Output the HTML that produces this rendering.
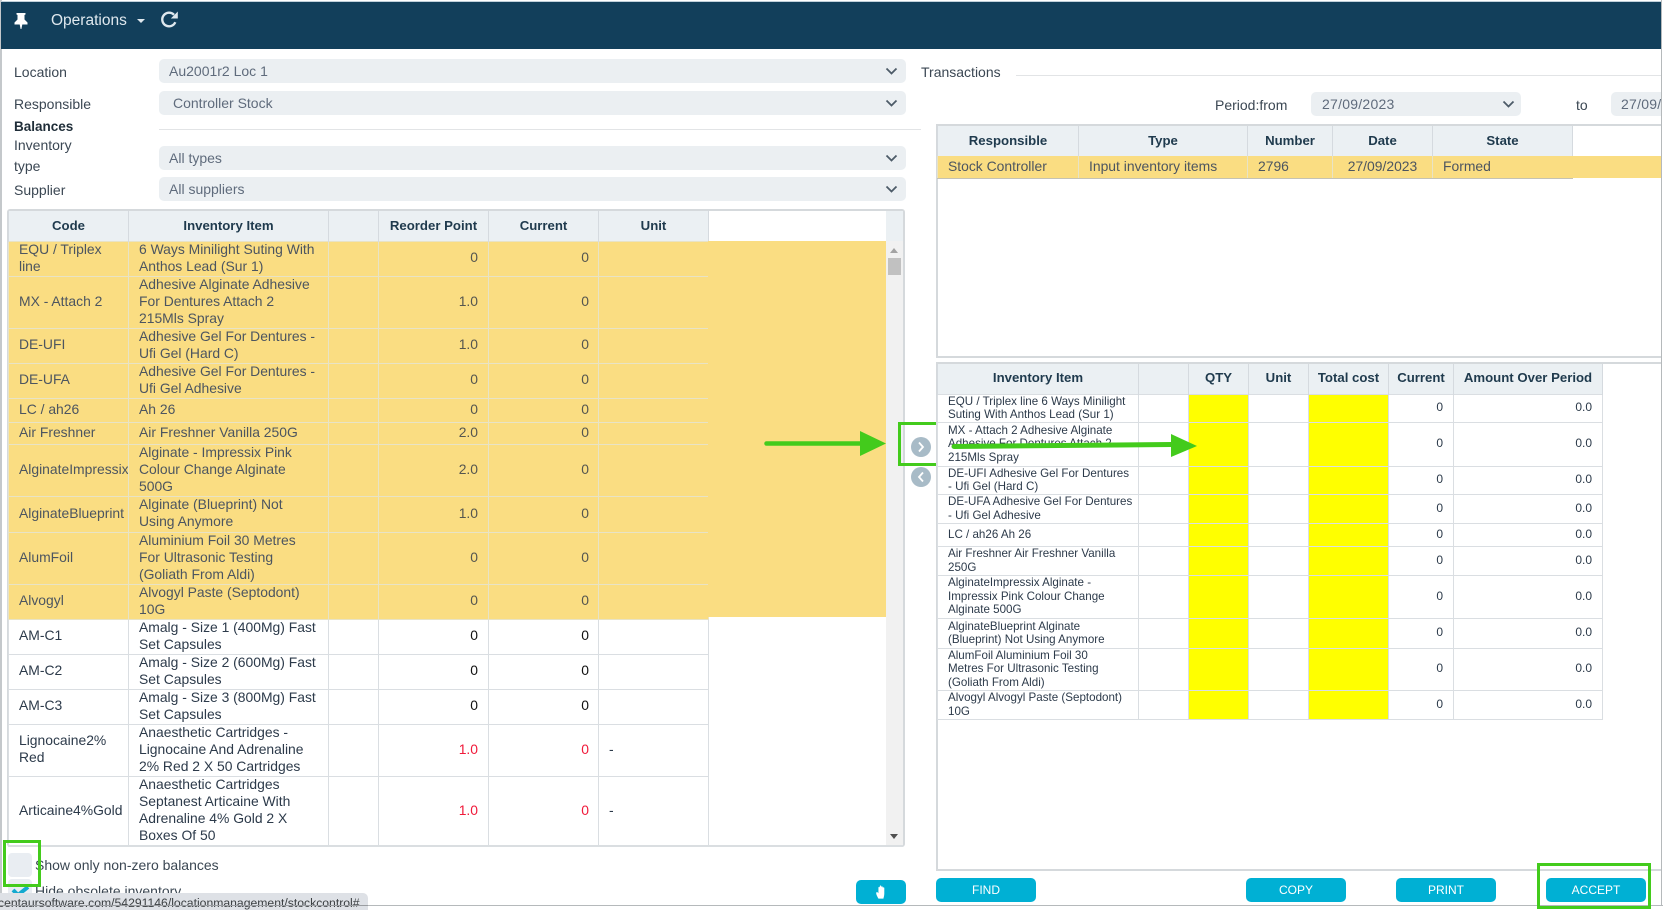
<!DOCTYPE html>
<html><head><meta charset="utf-8"><title>Operations</title>
<style>
html,body{margin:0;padding:0;width:1663px;height:910px;overflow:hidden;background:#fff;font-family:"Liberation Sans",sans-serif;color:#333}
.a{position:absolute;white-space:nowrap}
.lb{font-size:14px;color:#3b4753;line-height:17px}
.sel{position:absolute;background:#ebeff2;border-radius:5px;height:24px;line-height:25px;font-size:14px;color:#5f6b7c;padding-left:11px;box-sizing:border-box}
.chev{position:absolute;top:8px;width:13px;height:8px}
table{position:absolute;border-collapse:collapse;table-layout:fixed;font-size:13.9px;line-height:17px}
td,th{padding:0;white-space:nowrap;overflow:hidden}
th{background:#ebf0f3;color:#1f3a4d;font-weight:bold;font-size:13.2px;border-left:1px solid #d5dadf;border-right:1px solid #d5dadf;text-align:center}
i{font-style:normal;position:relative;top:-1px}
#L td{border:1px solid #dadee2;color:#2c3a4a}
#L tr.y td{background:#fadd82;color:#4c5560;border-color:#e8e3c6}
#L td:nth-child(1){padding-left:10px}
#L td:nth-child(2){padding-left:10px}
#L td:nth-child(4){text-align:right;padding-right:10px;color:#111}
#L td:nth-child(5){text-align:right;padding-right:9px;color:#111}
#L tr.y td:nth-child(4),#L tr.y td:nth-child(5){color:#55564f}
#L td.r{color:#f01a3a!important}
#R{font-size:11.6px;line-height:13.5px}
#R td{border:1px solid #dadee2;color:#2c3a4a;background:#fff}
#R td:nth-child(1){padding-left:10px}
#R td.q{background:#ff0}
#R td:nth-child(6),#R td:nth-child(7){text-align:right;padding-right:10px;font-size:12px}
#R th,#T th{padding-bottom:2px}
#T td{background:#fadd82;color:#4c5560;border-left:1px solid #e8e3c6;border-right:1px solid #e8e3c6;border-bottom:1px solid #c4c2b4}
.btn{position:absolute;background:#00b0d4;color:#fff;border-radius:5px;height:24px;line-height:24px;text-align:center;font-size:12px;width:100px}
.g{position:absolute;border:3px solid #43cb1c;box-sizing:border-box}
.ln{position:absolute;background:#d9dde0}
.cir{position:absolute;width:20px;height:20px;border-radius:50%;background:#a8bbc7}
</style></head><body>

<!-- page frame -->
<div class="ln" style="left:0;top:0;width:2px;height:905px;background:#c4c8cb"></div>
<div class="ln" style="left:1661px;top:0;width:1px;height:905px;background:#b5b9bb"></div>
<div class="ln" style="left:0;top:905px;width:1663px;height:1px;background:#b5b9bb"></div>

<!-- header -->
<div class="a" style="left:1px;top:1px;width:1660px;height:48px;background:#123f5b;border-top:1px solid #c0d0da;box-sizing:border-box"></div>
<svg class="a" style="left:14px;top:12px" width="14" height="17" viewBox="0 0 14 17"><path d="M2.500 1h9v1.500L10.500 3v4.500L13.500 10.500v2H8.300L7.400 17h-.8L5.700 12.500H.5v-2L3.500 7.500V3L2.500 2.500z" fill="#fff"/></svg>
<div class="a" style="left:51px;top:12px;font-size:15.500px;line-height:18px;color:#dfe8ee">Operations</div>
<div class="a" style="left:137px;top:19px;width:0;height:0;border-left:4px solid transparent;border-right:4px solid transparent;border-top:4px solid #dfe8ee"></div>
<svg class="a" style="left:160px;top:10px" width="19" height="19" viewBox="0 0 19 19"><path d="M15.300 12.200A6.800 6.800 0 1 1 14 4.800" fill="none" stroke="#dfe8ee" stroke-width="2.400"/><path d="M17.800 1.500v7h-7z" fill="#dfe8ee"/></svg>

<!-- left form -->
<div class="a lb" style="left:14px;top:64px">Location</div>
<div class="a lb" style="left:14px;top:96px">Responsible</div>
<div class="a lb" style="left:14px;top:118px;font-weight:bold;font-size:13.500px;color:#1f2d38">Balances</div>
<div class="a lb" style="left:14px;top:137px">Inventory</div>
<div class="a lb" style="left:14px;top:158px">type</div>
<div class="a lb" style="left:14px;top:182px">Supplier</div>

<div class="sel" style="left:159px;top:59px;width:747px;padding-left:10px">Au2001r2 Loc 1<svg class="chev" style="left:726px" viewBox="0 0 13 8"><path d="M1.500 1.500l5 5 5-5" fill="none" stroke="#4d5b68" stroke-width="1.800"/></svg></div>
<div class="sel" style="left:159px;top:91px;width:747px;padding-left:14px">Controller Stock<svg class="chev" style="left:726px" viewBox="0 0 13 8"><path d="M1.500 1.500l5 5 5-5" fill="none" stroke="#4d5b68" stroke-width="1.800"/></svg></div>
<div class="ln" style="left:159px;top:129px;width:762px;height:1px;background:#e2e4e6"></div>
<div class="sel" style="left:159px;top:146px;width:747px;padding-left:10px">All types<svg class="chev" style="left:726px" viewBox="0 0 13 8"><path d="M1.500 1.500l5 5 5-5" fill="none" stroke="#4d5b68" stroke-width="1.800"/></svg></div>
<div class="sel" style="left:159px;top:177px;width:747px;padding-left:10px">All suppliers<svg class="chev" style="left:726px" viewBox="0 0 13 8"><path d="M1.500 1.500l5 5 5-5" fill="none" stroke="#4d5b68" stroke-width="1.800"/></svg></div>

<!-- left table frame -->
<div class="a" style="left:7px;top:209px;width:898px;height:638px;border:1px solid #d5d9dc;border-width:2px 2px 2px 2px;border-radius:3px;box-sizing:border-box"></div>
<div class="a" style="left:886px;top:211px;width:17px;height:30px;background:#ebf0f3"></div>
<div class="a" style="left:886px;top:241px;width:17px;height:604px;background:#f1f1f1"></div>
<div class="a" style="left:890px;top:248px;width:0;height:0;border-left:4px solid transparent;border-right:4px solid transparent;border-bottom:5px solid #a3a3a3"></div>
<div class="a" style="left:888px;top:258px;width:13px;height:17px;background:#c1c1c1"></div>
<div class="a" style="left:890px;top:834px;width:0;height:0;border-left:4px solid transparent;border-right:4px solid transparent;border-top:5px solid #505050"></div>

<table id="L" style="left:8px;top:211px;width:700px">
<colgroup><col style="width:120px"><col style="width:200px"><col style="width:50px"><col style="width:110px"><col style="width:110px"><col style="width:110px"></colgroup>
<tr style="height:30px"><th>Code</th><th>Inventory Item</th><th></th><th>Reorder Point</th><th>Current</th><th>Unit</th></tr>
<tr class="y" style="height:34px"><td><i>EQU / Triplex<br>line</i></td><td><i>6 Ways Minilight Suting With<br>Anthos Lead (Sur 1)</i></td><td></td><td><i>0</i></td><td><i>0</i></td><td></td></tr>
<tr class="y" style="height:52px"><td><i>MX - Attach 2</i></td><td><i>Adhesive Alginate Adhesive<br>For Dentures Attach 2<br>215Mls Spray</i></td><td></td><td><i>1.0</i></td><td><i>0</i></td><td></td></tr>
<tr class="y" style="height:35px"><td><i>DE-UFI</i></td><td><i>Adhesive Gel For Dentures -<br>Ufi Gel (Hard C)</i></td><td></td><td><i>1.0</i></td><td><i>0</i></td><td></td></tr>
<tr class="y" style="height:35px"><td><i>DE-UFA</i></td><td><i>Adhesive Gel For Dentures -<br>Ufi Gel Adhesive</i></td><td></td><td><i>0</i></td><td><i>0</i></td><td></td></tr>
<tr class="y" style="height:24px"><td><i>LC / ah26</i></td><td><i>Ah 26</i></td><td></td><td><i>0</i></td><td><i>0</i></td><td></td></tr>
<tr class="y" style="height:22px"><td><i>Air Freshner</i></td><td><i>Air Freshner Vanilla 250G</i></td><td></td><td><i>2.0</i></td><td><i>0</i></td><td></td></tr>
<tr class="y" style="height:52px"><td><i>AlginateImpressix</i></td><td><i>Alginate - Impressix Pink<br>Colour Change Alginate<br>500G</i></td><td></td><td><i>2.0</i></td><td><i>0</i></td><td></td></tr>
<tr class="y" style="height:36px"><td><i>AlginateBlueprint</i></td><td><i>Alginate (Blueprint) Not<br>Using Anymore</i></td><td></td><td><i>1.0</i></td><td><i>0</i></td><td></td></tr>
<tr class="y" style="height:51px"><td><i>AlumFoil</i></td><td><i>Aluminium Foil 30 Metres<br>For Ultrasonic Testing<br>(Goliath From Aldi)</i></td><td></td><td><i>0</i></td><td><i>0</i></td><td></td></tr>
<tr class="y" style="height:35px"><td><i>Alvogyl</i></td><td><i>Alvogyl Paste (Septodont)<br>10G</i></td><td></td><td><i>0</i></td><td><i>0</i></td><td></td></tr>
<tr style="height:35px"><td><i>AM-C1</i></td><td><i>Amalg - Size 1 (400Mg) Fast<br>Set Capsules</i></td><td></td><td><i>0</i></td><td><i>0</i></td><td></td></tr>
<tr style="height:35px"><td><i>AM-C2</i></td><td><i>Amalg - Size 2 (600Mg) Fast<br>Set Capsules</i></td><td></td><td><i>0</i></td><td><i>0</i></td><td></td></tr>
<tr style="height:35px"><td><i>AM-C3</i></td><td><i>Amalg - Size 3 (800Mg) Fast<br>Set Capsules</i></td><td></td><td><i>0</i></td><td><i>0</i></td><td></td></tr>
<tr style="height:52px"><td><i>Lignocaine2%<br>Red</i></td><td><i>Anaesthetic Cartridges -<br>Lignocaine And Adrenaline<br>2% Red 2 X 50 Cartridges</i></td><td></td><td class="r"><i>1.0</i></td><td class="r"><i>0</i></td><td style="padding-left:10px"><i>-</i></td></tr>
<tr style="height:70px"><td><i>Articaine4%Gold</i></td><td><i>Anaesthetic Cartridges<br>Septanest Articaine With<br>Adrenaline 4% Gold 2 X<br>Boxes Of 50</i></td><td></td><td class="r"><i>1.0</i></td><td class="r"><i>0</i></td><td style="padding-left:10px"><i>-</i></td></tr>
</table>
<div class="a" style="left:708px;top:241px;width:178px;height:376px;background:#fadd82"></div>
<div class="a" style="left:8px;top:845px;width:895px;height:2px;background:#dadee1"></div>

<!-- checkboxes -->
<div class="a" style="left:8px;top:853px;width:24px;height:24px;background:#e9edf2;border-radius:4px"></div>
<div class="a lb" style="left:35px;top:857px">Show only non-zero balances</div>
<div class="a" style="left:8px;top:879px;width:24px;height:24px;background:#e9edf2;border-radius:4px"></div>
<svg class="a" style="left:11px;top:885px" width="20" height="14" viewBox="0 0 20 14"><path d="M2 5l5 5L17 2" fill="none" stroke="#13a9cf" stroke-width="4"/></svg>
<div class="a lb" style="left:35px;top:883px;height:10px;overflow:hidden;">Hide obsolete inventory</div>
<div class="g" style="left:3px;top:840px;width:38px;height:47px"></div>

<!-- hand btn -->
<div class="btn" style="left:856px;top:880px;width:50px"></div>
<svg class="a" style="left:875px;top:885px" width="13" height="14" viewBox="0 0 13 16"><path d="M3 15.500C1.500 13 0 10 .500 8.500c1-1 2 0 2.500 1V3c0-1 1.500-1 1.500 0V1.500c0-1.200 1.800-1.200 1.800 0V2.500c0-1 1.700-1 1.700 0V3.500c0-1 1.700-1 1.700 0V10c0 2-.7 4-1 5.500z" fill="#fff"/></svg>

<!-- arrow 1 -->
<svg class="a" style="left:760px;top:425px;overflow:visible" width="130" height="40" viewBox="0 0 130 40">
<line x1="6.500" y1="18.500" x2="102" y2="18.500" stroke="#43cb1c" stroke-width="4.500" stroke-linecap="round"/>
<path d="M100 6l26 12.500L100 31z" fill="#43cb1c"/>
</svg>

<!-- transfer buttons -->
<div class="cir" style="left:911px;top:437px"></div>
<svg class="a" style="left:917px;top:441px" width="8" height="12" viewBox="0 0 8 12"><path d="M2 1.500L6 6l-4 4.500" fill="none" stroke="#fff" stroke-width="1.800"/></svg>
<div class="cir" style="left:911px;top:467px"></div>
<svg class="a" style="left:917px;top:471px" width="8" height="12" viewBox="0 0 8 12"><path d="M6 1.500L2 6l4 4.500" fill="none" stroke="#fff" stroke-width="1.800"/></svg>
<div class="g" style="left:898px;top:422px;width:44px;height:44px"></div>

<!-- right header form -->
<div class="a lb" style="left:921px;top:64px">Transactions</div>
<div class="ln" style="left:1016px;top:75px;width:645px;height:1px;background:#e2e4e6"></div>
<div class="a lb" style="left:1215px;top:97px">Period:from</div>
<div class="sel" style="left:1311px;top:92px;width:210px;padding-left:11px;letter-spacing:.25px">27/09/2023<svg class="chev" style="left:191px" viewBox="0 0 13 8"><path d="M1.500 1.500l5 5 5-5" fill="none" stroke="#4d5b68" stroke-width="1.800"/></svg></div>
<div class="a lb" style="left:1576px;top:97px">to</div>
<div class="sel" style="left:1611px;top:92px;width:50px;padding-left:10px;overflow:hidden;border-radius:5px 0 0 5px;letter-spacing:.25px">27/09/2023</div>

<!-- transactions table -->
<div class="a" style="left:936px;top:124px;width:725px;height:234px;border:solid #d5d9dc;border-width:2px 0 2px 2px;box-sizing:border-box"></div>
<table id="T" style="left:937px;top:126px;width:635px">
<colgroup><col style="width:141px"><col style="width:169px"><col style="width:85px"><col style="width:100px"><col style="width:140px"></colgroup>
<tr style="height:30px"><th>Responsible</th><th>Type</th><th>Number</th><th>Date</th><th>State</th></tr>
<tr style="height:22px"><td style="padding-left:10px">Stock Controller</td><td style="padding-left:10px">Input inventory items</td><td style="padding-left:10px">2796</td><td style="text-align:center">27/09/2023</td><td style="padding-left:10px">Formed</td></tr>
</table>
<div class="a" style="left:1572px;top:156px;width:89px;height:22px;background:#fadd82"></div>

<!-- items table -->
<div class="a" style="left:936px;top:362px;width:725px;height:509px;border:solid #d5d9dc;border-width:2px 0 2px 2px;box-sizing:border-box"></div>
<table id="R" style="left:937px;top:364px;width:665px">
<colgroup><col style="width:201px"><col style="width:50px"><col style="width:60px"><col style="width:60px"><col style="width:80px"><col style="width:65px"><col style="width:149px"></colgroup>
<tr style="height:30px;line-height:17px"><th>Inventory Item</th><th></th><th>QTY</th><th>Unit</th><th>Total cost</th><th>Current</th><th>Amount Over Period</th></tr>
<tr style="height:28px"><td>EQU / Triplex line 6 Ways Minilight<br>Suting With Anthos Lead (Sur 1)</td><td></td><td class="q"></td><td></td><td class="q"></td><td>0</td><td>0.0</td></tr>
<tr style="height:44px"><td>MX - Attach 2 Adhesive Alginate<br>Adhesive For Dentures Attach 2<br>215Mls Spray</td><td></td><td class="q"></td><td></td><td class="q"></td><td>0</td><td>0.0</td></tr>
<tr style="height:28px"><td>DE-UFI Adhesive Gel For Dentures<br>- Ufi Gel (Hard C)</td><td></td><td class="q"></td><td></td><td class="q"></td><td>0</td><td>0.0</td></tr>
<tr style="height:29px"><td>DE-UFA Adhesive Gel For Dentures<br>- Ufi Gel Adhesive</td><td></td><td class="q"></td><td></td><td class="q"></td><td>0</td><td>0.0</td></tr>
<tr style="height:23px"><td>LC / ah26 Ah 26</td><td></td><td class="q"></td><td></td><td class="q"></td><td>0</td><td>0.0</td></tr>
<tr style="height:29px"><td>Air Freshner Air Freshner Vanilla<br>250G</td><td></td><td class="q"></td><td></td><td class="q"></td><td>0</td><td>0.0</td></tr>
<tr style="height:43px"><td>AlginateImpressix Alginate -<br>Impressix Pink Colour Change<br>Alginate 500G</td><td></td><td class="q"></td><td></td><td class="q"></td><td>0</td><td>0.0</td></tr>
<tr style="height:30px"><td>AlginateBlueprint Alginate<br>(Blueprint) Not Using Anymore</td><td></td><td class="q"></td><td></td><td class="q"></td><td>0</td><td>0.0</td></tr>
<tr style="height:42px"><td>AlumFoil Aluminium Foil 30<br>Metres For Ultrasonic Testing<br>(Goliath From Aldi)</td><td></td><td class="q"></td><td></td><td class="q"></td><td>0</td><td>0.0</td></tr>
<tr style="height:29px"><td>Alvogyl Alvogyl Paste (Septodont)<br>10G</td><td></td><td class="q"></td><td></td><td class="q"></td><td>0</td><td>0.0</td></tr>
</table>
<svg class="a" style="left:950px;top:436px;overflow:visible" width="250" height="20"><path d="M4 10.500L222 8.500" stroke="#43cb1c" stroke-width="5" stroke-linecap="round" fill="none"/><path d="M221 -2l26 12L221 21z" fill="#43cb1c"/></svg>

<!-- bottom buttons -->
<div class="btn" style="left:936px;top:878px">FIND</div>
<div class="btn" style="left:1246px;top:878px">COPY</div>
<div class="btn" style="left:1396px;top:878px">PRINT</div>
<div class="btn" style="left:1546px;top:878px">ACCEPT</div>
<div class="g" style="left:1537px;top:863px;width:114px;height:46px"></div>

<!-- status tooltip -->
<div class="a" style="left:0;top:893px;width:368px;height:17px;background:#dee1e6;border-radius:0 5px 0 0;overflow:hidden"><div class="a" style="left:-2px;top:3px;font-size:12.200px;line-height:15px;color:#3c4043">centaursoftware.com/54291146/locationmanagement/stockcontrol#</div></div>
<div class="a" style="left:0;top:905px;width:368px;height:1px;background:#9a9da1"></div>

</body></html>
